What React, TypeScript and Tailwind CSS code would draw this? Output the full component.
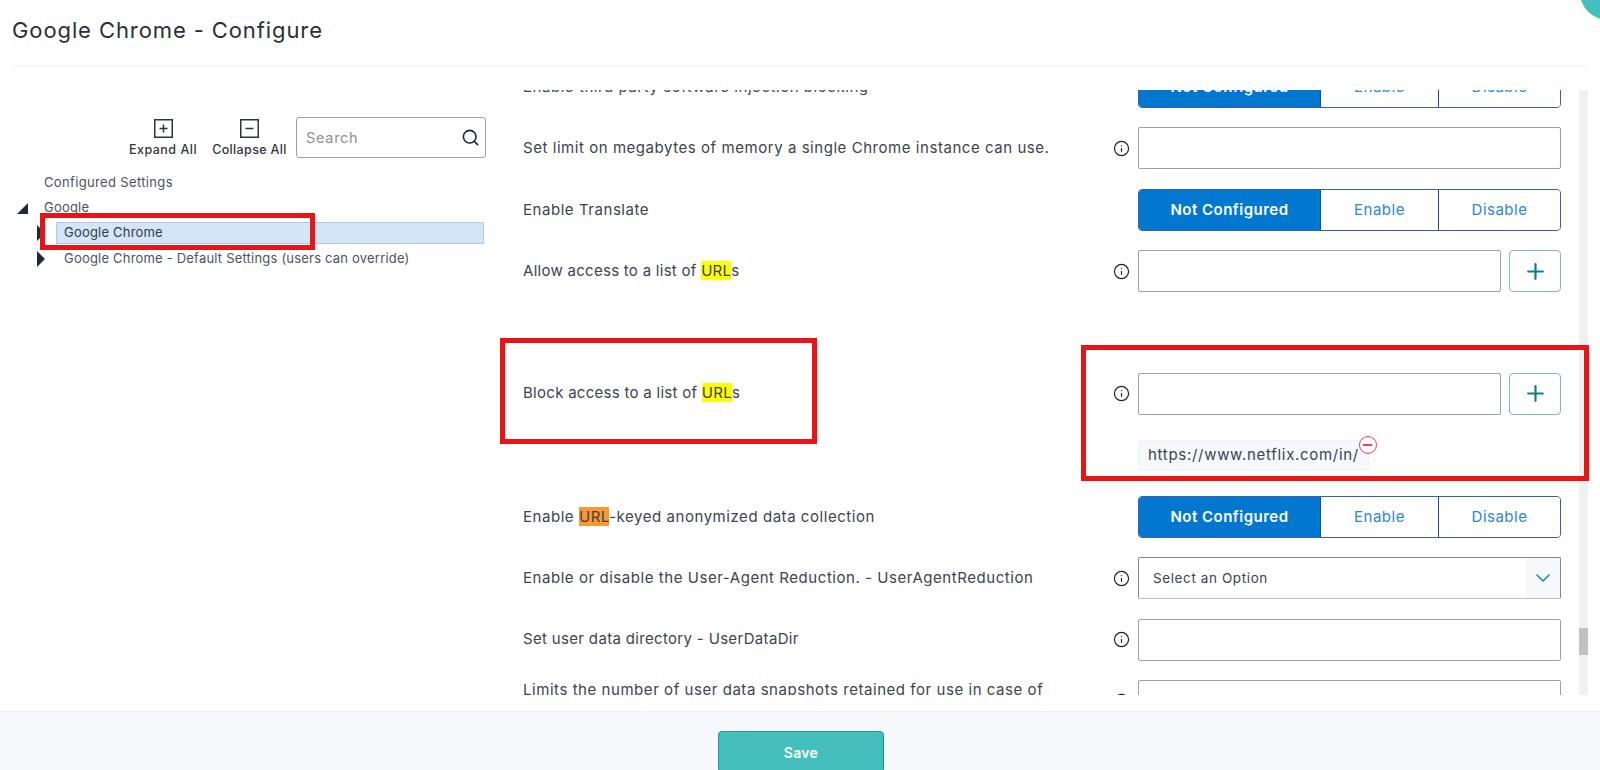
import React from 'react';
import { ChevronDown, Info, Plus, Search } from 'lucide-react';

const Marked: React.FC<{ color: string; children: React.ReactNode }> = ({ color, children }) => (
  <span className={color}>{children}</span>
);

const Label: React.FC<{ top?: boolean; children: React.ReactNode }> = ({ top, children }) => (
  <div
    className={
      top
        ? 'flex h-[42px] flex-1 items-start pl-[1px] pt-[1px] text-[15px] leading-[18px] tracking-[0.55px] text-[#3b4450]'
        : 'flex h-[42px] flex-1 items-center pl-[1px] text-[15px] tracking-[0.55px] text-[#3b4450]'
    }
  >
    <span className="whitespace-nowrap">{children}</span>
  </div>
);

const InfoSlot: React.FC<{ show?: boolean }> = ({ show = true }) => (
  <div className="flex h-[42px] w-[34px] items-center">
    {show && <Info className="ml-[9px] h-[17px] w-[17px] text-[#222]" strokeWidth={1.7} />}
  </div>
);

const TextField: React.FC = () => (
  <input className="h-[42px] w-full rounded-[2px] border border-[#98a1ad] bg-white" />
);

const Segmented: React.FC = () => (
  <div className="flex h-[42px] w-[423px] overflow-hidden rounded-[4px] border border-[#3a5fa8] text-[15px] tracking-[0.5px]">
    <div className="flex w-[181px] items-center justify-center bg-[#0277cf] font-semibold text-white">Not Configured</div>
    <div className="flex w-[118px] items-center justify-center border-l border-[#1d4a9c] bg-white text-[#2a86d9]">Enable</div>
    <div className="flex flex-1 items-center justify-center border-l border-[#1d4a9c] bg-white text-[#2a86d9]">Disable</div>
  </div>
);

const PlusField: React.FC = () => (
  <div className="flex w-[423px] gap-2">
    <input className="h-[42px] flex-1 rounded-[2px] border border-[#98a1ad] bg-white" />
    <button className="flex h-[42px] w-[52px] items-center justify-center rounded-[4px] border border-[#7fb8bd] bg-white">
      <Plus className="h-[25px] w-[25px] text-[#0f7f85]" strokeWidth={2.1} />
    </button>
  </div>
);

const Row: React.FC<{
  label: React.ReactNode;
  info?: boolean;
  labelTop?: boolean;
  children: React.ReactNode;
  className?: string;
}> = ({ label, info = true, labelTop = false, children, className = '' }) => (
  <div className={`flex items-start ${className}`}>
    <Label top={labelTop}>{label}</Label>
    <InfoSlot show={info} />
    <div className="w-[423px]">{children}</div>
  </div>
);

const TreeArrow: React.FC = () => (
  <svg width="8" height="16" viewBox="0 0 8 16" className="shrink-0">
    <path d="M0 0 L8 8 L0 16 Z" fill="#1d2a3a" />
  </svg>
);

const BoxIcon: React.FC<{ plus?: boolean }> = ({ plus }) => (
  <svg width="19" height="19" viewBox="0 0 19 19" fill="none" stroke="#2b3440">
    <rect x="0.75" y="0.75" width="17.5" height="17.5" strokeWidth="1.5" />
    <path d="M5.5 9.5 H13.5" strokeWidth="1.5" />
    {plus && <path d="M9.5 5.5 V13.5" strokeWidth="1.5" />}
  </svg>
);

export default function App() {
  return (
    <div className="relative flex h-[770px] flex-col overflow-hidden bg-white font-['Inter',sans-serif]">
      <div className="absolute right-[-36px] top-[-36px] h-[56px] w-[56px] rounded-full bg-[#45bfbd]" />

      <header className="mx-3 flex h-[67px] shrink-0 items-start border-b-2 border-[#f3f6fa] pt-[16px] text-[22px] leading-[28px] tracking-[0.9px] text-[#2a2f36]">
        Google Chrome - Configure
      </header>

      <main className="flex min-h-0 flex-1">
        {/* left tree */}
        <aside className="w-[522px] shrink-0 pt-[50px]">
          <div className="flex h-[42px] items-start justify-end pr-[36px]">
            <div className="mr-[14px] flex w-[70px] flex-col items-center pt-[2px]">
              <BoxIcon plus />
              <span className="mt-[3px] whitespace-nowrap text-[12.5px] font-medium leading-[17px] tracking-[0.5px] text-[#2f3743]">Expand All</span>
            </div>
            <div className="mr-[9px] flex w-[75px] flex-col items-center pt-[2px]">
              <BoxIcon />
              <span className="mt-[3px] whitespace-nowrap text-[12.5px] font-medium leading-[17px] tracking-[0.35px] text-[#2f3743]">Collapse All</span>
            </div>
            <div className="flex h-[41px] w-[190px] items-center justify-between rounded-[3px] border border-[#98a1ad] pl-[9px] pr-[5px]">
              <span className="text-[14.5px] tracking-[0.7px] text-[#8b929b]">Search</span>
              <Search className="h-[19px] w-[19px] text-[#1c2128]" strokeWidth={2} />
            </div>
          </div>

          <div className="mt-[14px] pl-[17px] text-[13px] tracking-[0.2px] text-[#4b5360]">
            <div className="pl-[27px] leading-[18px] tracking-[0.35px]">Configured Settings</div>
            <div className="relative mt-[7px] flex items-center leading-[18px]">
              <svg width="11" height="11" viewBox="0 0 11 11" className="mr-[16px] mt-[2px] shrink-0">
                <path d="M11 0 V11 H0 Z" fill="#1d2a3a" />
              </svg>
              Google
            </div>
            <div className="mt-[6px] flex items-center pl-[20px]">
              <TreeArrow />
              <div className="ml-[11px] flex h-[22px] w-[428px] items-center border border-[#b4c9dd] bg-[#d3e5f6] pl-[7px] text-[#333c48]">
                Google Chrome
              </div>
            </div>
            <div className="mt-[5px] flex h-[20px] items-center pl-[20px]">
              <TreeArrow />
              <span className="ml-[19px] whitespace-nowrap">Google Chrome - Default Settings (users can override)</span>
            </div>
          </div>
        </aside>

        {/* settings list */}
        <section className="flex h-[628px] min-w-0 flex-1 flex-col pt-[23px] pr-[12px]">
          <div className="flex h-[605px] gap-[18px]">
            <div className="min-w-0 flex-1 overflow-hidden">
              <div className="-mt-[24px] flex flex-col gap-[19.4px]">
                <Row label="Enable third party software injection blocking" info={false}>
                  <Segmented />
                </Row>
                <Row label="Set limit on megabytes of memory a single Chrome instance can use.">
                  <TextField />
                </Row>
                <Row label="Enable Translate" info={false}>
                  <Segmented />
                </Row>
                <Row
                  className="mb-[61px]"
                  label={<span className="tracking-[0.28px]">Allow access to a list of <Marked color="bg-[#ffff00]">URL</Marked>s</span>}
                >
                  <PlusField />
                </Row>
                <Row
                  className="mb-[6px]"
                  label={<span className="tracking-[0.28px]">Block access to a list of <Marked color="bg-[#ffff00]">URL</Marked>s</span>}
                >
                  <PlusField />
                  <div className="relative mt-[25px] inline-flex h-[31px] items-center rounded-[4px] border border-[#eef2f6] bg-[#f5f9fc] px-[9px] text-[15px] tracking-[0.7px] text-[#3b4450]">
                    https://www.netflix.com/in/
                    <span className="absolute right-[-9px] top-[-5px] flex h-[18px] w-[18px] items-center justify-center rounded-full border border-[#f0415a] bg-white">
                      <span className="h-[2px] w-[9px] bg-[#f0415a]" />
                    </span>
                  </div>
                </Row>
                <Row label={<>Enable <Marked color="bg-[#ff9632]">URL</Marked>-keyed anonymized data collection</>} info={false}>
                  <Segmented />
                </Row>
                <Row label="Enable or disable the User-Agent Reduction. - UserAgentReduction">
                  <div className="flex h-[42px] items-stretch overflow-hidden rounded-[2px] border border-[#7c8898] border-b-[#b9bfc7]">
                    <span className="flex flex-1 items-center pl-[14px] text-[13.5px] tracking-[0.6px] text-[#3b4450]">Select an Option</span>
                    <span className="flex w-[34px] items-center justify-center bg-[#f5f9fc]">
                      <ChevronDown className="h-[24px] w-[24px] text-[#1f82dc]" strokeWidth={1.6} />
                    </span>
                  </div>
                </Row>
                <Row label={<span className="tracking-[0.33px]">Set user data directory - UserDataDir</span>}>
                  <TextField />
                </Row>
                <Row labelTop label="Limits the number of user data snapshots retained for use in case of">
                  <TextField />
                </Row>
              </div>
            </div>
            <div className="w-[9px] shrink-0 bg-[#f0f0f0] pt-[538px]">
              <div className="h-[27px] bg-[#c1c1c1]" />
            </div>
          </div>
        </section>
      </main>

      <footer className="flex h-[59px] shrink-0 justify-center border-t border-[#eef0f2] bg-[#f5f9fc] pt-[19px]">
        <button className="ml-[2px] h-[42px] w-[166px] rounded-[4px] border border-[#1f9a9a] bg-[#45bfbd] text-[14px] font-semibold tracking-[0.3px] text-white">
          Save
        </button>
      </footer>

      {/* red annotation boxes drawn over the screenshot */}
      <div className="absolute left-[40px] top-[213px] h-[37px] w-[275px] border-[5px] border-[#e81416]" />
      <div className="absolute left-[500px] top-[338px] h-[106px] w-[317px] border-[5px] border-[#e81416]" />
      <div className="absolute left-[1081px] top-[345px] h-[136px] w-[508px] border-[5px] border-[#e81416]" />
    </div>
  );
}
